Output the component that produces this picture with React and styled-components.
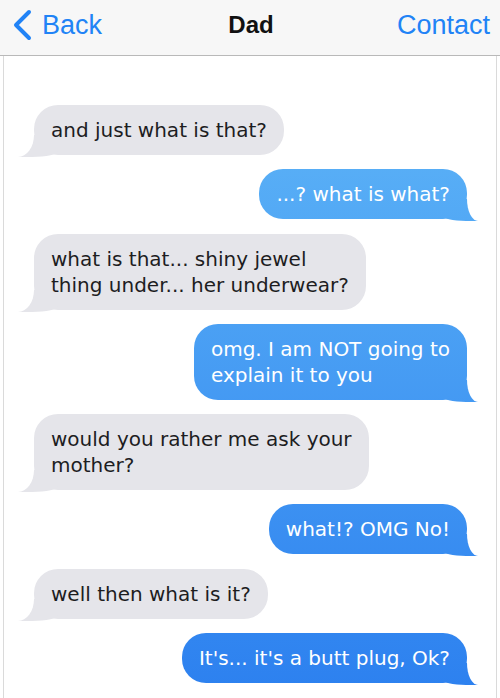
import React from "react";
import styled, { createGlobalStyle, css } from "styled-components";

const messages = [
  { id: 1, mine: false, lines: ["and just what is that?"] },
  { id: 2, mine: true, lines: ["...? what is what?"] },
  { id: 3, mine: false, lines: ["what is that... shiny jewel", "thing under... her underwear?"] },
  { id: 4, mine: true, lines: ["omg. I am NOT going to", "explain it to you"] },
  { id: 5, mine: false, lines: ["would you rather me ask your", "mother?"] },
  { id: 6, mine: true, lines: ["what!? OMG No!"] },
  { id: 7, mine: false, lines: ["well then what is it?"] },
  { id: 8, mine: true, lines: ["It's... it's a butt plug, Ok?"] },
];

const Messages = () => {
  return (
    <Screen>
      <GlobalStyle />
      <Header>
        <NavLink $side="left">
          <svg width="20" height="32" viewBox="0 0 20 32">
            <path
              d="M17 3 L4 16 L17 29"
              fill="none"
              stroke="currentColor"
              strokeWidth="4"
              strokeLinecap="round"
              strokeLinejoin="round"
            />
          </svg>
          Back
        </NavLink>
        <Title>Dad</Title>
        <NavLink $side="right">Contact</NavLink>
      </Header>
      <Thread>
        {messages.map((msg) => (
          <Bubble key={msg.id} $mine={msg.mine}>
            {msg.lines.map((line, i) => (
              <React.Fragment key={i}>
                {i > 0 && <br />}
                {line}
              </React.Fragment>
            ))}
          </Bubble>
        ))}
      </Thread>
    </Screen>
  );
};

const GlobalStyle = createGlobalStyle`
  *, *::before, *::after {
    box-sizing: border-box;
  }
  html, body {
    margin: 0;
    padding: 0;
    background: #fff;
    overflow: hidden;
  }
  body {
    font-family: "Liberation Sans", Arial, sans-serif;
  }
`;

const Screen = styled.div`
  width: 500px;
  height: 698px;
  display: flex;
  flex-direction: column;
`;

const Header = styled.header`
  height: 56px;
  flex-shrink: 0;
  background: #f7f7f7;
  border-bottom: 1px solid #b9b9b9;
  display: grid;
  grid-template-columns: 1fr auto 1fr;
  align-items: center;
  padding: 0 10px 6px 12px;
`;

const NavLink = styled.a`
  display: flex;
  align-items: center;
  gap: 10px;
  color: #2183f6;
  font-size: 27px;
  line-height: 30px;
  cursor: pointer;
  justify-self: ${({ $side }) => ($side === "left" ? "start" : "end")};
`;

const Title = styled.h1`
  margin: 0;
  font-size: 24px;
  line-height: 30px;
  font-weight: 700;
  color: #111;
`;

const Thread = styled.main`
  flex: 1;
  margin: 0 3px;
  border-left: 1px solid #dadada;
  border-right: 1px solid #dadada;
  padding: 49px 29px 0 30px;
  display: flex;
  flex-direction: column;
  gap: 14.3px;
`;

const blueFill = css`
  color: #fff;
  background: linear-gradient(180deg, #65bcf8 0px, #2c80ef 698px);
  background-attachment: fixed;
`;

const leftTail = css`
  &::before {
    left: -16px;
    width: 40px;
    border-bottom-right-radius: 26px 6px;
  }
  &::after {
    left: -20px;
    width: 20px;
    border-bottom-right-radius: 16px 22px;
  }
`;

const rightTail = css`
  &::before {
    right: -11px;
    width: 36px;
    border-bottom-left-radius: 24px 6px;
  }
  &::after {
    right: -20px;
    width: 20px;
    border-bottom-left-radius: 11px 22px;
  }
`;

const Bubble = styled.div`
  position: relative;
  z-index: 0;
  align-self: ${({ $mine }) => ($mine ? "flex-end" : "flex-start")};
  padding: 12px 17px;
  border-radius: 24px;
  font-family: "DejaVu Sans", Verdana, sans-serif;
  font-size: 20px;
  line-height: 26px;
  white-space: nowrap;
  ${({ $mine }) => ($mine ? blueFill : "color: #1d1d1f; background: #e5e5ea;")}

  &::before,
  &::after {
    content: "";
    position: absolute;
    z-index: -1;
    bottom: -2px;
  }
  &::before {
    height: 22px;
    background: inherit;
    background-attachment: inherit;
  }
  &::after {
    height: 24px;
    background: #fff;
  }
  ${({ $mine }) => ($mine ? rightTail : leftTail)}
`;

export default Messages;
